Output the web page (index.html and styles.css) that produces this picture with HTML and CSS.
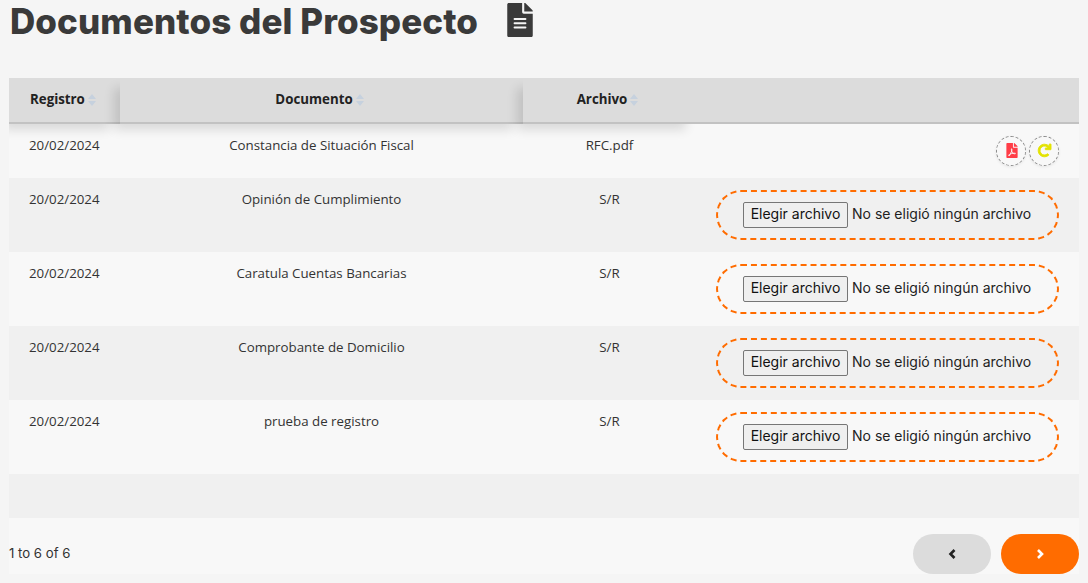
FILE: index.html
```html
<!DOCTYPE html>
<html lang="es">
<head>
<meta charset="utf-8">
<title>Documentos del Prospecto</title>
<link rel="stylesheet" href="styles.css">
</head>
<body>
<main class="page">
  <header class="title-row">
    <h1 class="title">Documentos del Prospecto</h1>
    <svg class="title-icon" viewBox="0 0 384 512"><path d="M224 136V0H24C10.7 0 0 10.7 0 24v464c0 13.3 10.7 24 24 24h336c13.3 0 24-10.7 24-24V160H248c-13.2 0-24-10.8-24-24zm64 236c0 6.6-5.4 12-12 12H108c-6.6 0-12-5.4-12-12v-8c0-6.6 5.4-12 12-12h168c6.6 0 12 5.4 12 12v8zm0-64c0 6.6-5.4 12-12 12H108c-6.6 0-12-5.4-12-12v-8c0-6.6 5.4-12 12-12h168c6.6 0 12 5.4 12 12v8zm0-72v8c0 6.6-5.4 12-12 12H108c-6.6 0-12-5.4-12-12v-8c0-6.6 5.4-12 12-12h168c6.6 0 12 5.4 12 12zm96-114.1v6.1H256V0h6.1c6.4 0 12.5 2.5 17 7l97.9 98c4.5 4.5 7 10.6 7 16.9z"/></svg>
  </header>
  <table class="docs">
    <colgroup><col class="c1"><col class="c2"><col class="c3"><col class="c4"></colgroup>
    <thead>
      <tr>
        <th class="left">Registro<svg class="sort" viewBox="0 0 8 12"><path d="M4 0l4 5H0zM4 12L0 7h8z"/></svg></th>
        <th class="doc">Documento<svg class="sort" viewBox="0 0 8 12"><path d="M4 0l4 5H0zM4 12L0 7h8z"/></svg></th>
        <th class="file">Archivo<svg class="sort" viewBox="0 0 8 12"><path d="M4 0l4 5H0zM4 12L0 7h8z"/></svg></th>
        <th></th>
      </tr>
    </thead>
    <tbody>
      <tr class="odd">
        <td class="left">20/02/2024</td><td>Constancia de Situación Fiscal</td><td>RFC.pdf</td>
        <td class="actions">
          <span class="round"><svg class="pdf" viewBox="0 0 384 512"><path d="M181.9 256.1c-5-16-4.9-46.9-2-46.9 8.4 0 7.6 36.9 2 46.9zm-1.7 47.2c-7.7 20.2-17.3 43.3-28.4 62.7 18.3-7 39-17.2 62.9-21.9-12.7-9.6-24.9-23.4-34.5-40.8zM86.1 428.1c0 .8 13.2-5.4 34.9-40.2-6.7 6.3-29.1 24.5-34.9 40.2zM248 160h136v328c0 13.3-10.7 24-24 24H24c-13.3 0-24-10.7-24-24V24C0 10.7 10.7 0 24 0h200v136c0 13.2 10.8 24 24 24zm-8 171.8c-20-12.2-33.3-29-42.7-53.8 4.5-18.5 11.6-46.6 6.2-64.2-4.7-29.4-42.4-26.5-47.8-6.8-5 18.3-.4 44.1 8.1 77-11.6 27.6-28.7 64.6-40.8 85.8-.1 0-.1.1-.2.1-27.1 13.9-73.6 44.5-54.5 68 5.6 6.9 16 10 21.5 10 17.9 0 35.7-18 61.1-61.8 25.8-8.5 54.1-19.1 79-23.2 21.7 11.8 47.1 19.5 64 19.5 29.2 0 31.2-32 19.7-43.4-13.9-13.6-54.3-9.7-73.6-7.2zM377 105L279 7c-4.5-4.5-10.6-7-17-7h-6v128h128v-6.1c0-6.3-2.5-12.4-7-16.9zm-74.1 255.3c4.1-2.7-2.5-11.9-42.8-9 37.1 15.8 42.8 9 42.8 9z"/></svg></span>
          <span class="round"><svg class="redo" viewBox="0 0 512 512"><path d="M500.33 0h-47.41a12 12 0 0 0-12 12.57l4 82.76A247.42 247.42 0 0 0 256 8C119.34 8 7.9 119.53 8 256.19 8.1 393.07 119.1 504 256 504a247.1 247.1 0 0 0 166.18-63.91 12 12 0 0 0 .48-17.43l-34-34a12 12 0 0 0-16.38-.55A176 176 0 1 1 402.1 157.8l-101.53-4.87a12 12 0 0 0-12.57 12v47.41a12 12 0 0 0 12 12h200.33a12 12 0 0 0 12-12V12a12 12 0 0 0-12-12z"/></svg></span>
        </td>
      </tr>
      <tr class="even">
        <td class="left">20/02/2024</td><td>Opinión de Cumplimiento</td><td>S/R</td>
        <td class="actions"><span class="upload"><button class="pick" type="button">Elegir archivo</button><span class="none">No se eligió ningún archivo</span></span></td>
      </tr>
      <tr class="odd">
        <td class="left">20/02/2024</td><td>Caratula Cuentas Bancarias</td><td>S/R</td>
        <td class="actions"><span class="upload"><button class="pick" type="button">Elegir archivo</button><span class="none">No se eligió ningún archivo</span></span></td>
      </tr>
      <tr class="even">
        <td class="left">20/02/2024</td><td>Comprobante de Domicilio</td><td>S/R</td>
        <td class="actions"><span class="upload"><button class="pick" type="button">Elegir archivo</button><span class="none">No se eligió ningún archivo</span></span></td>
      </tr>
      <tr class="odd">
        <td class="left">20/02/2024</td><td>prueba de registro</td><td>S/R</td>
        <td class="actions"><span class="upload"><button class="pick" type="button">Elegir archivo</button><span class="none">No se eligió ningún archivo</span></span></td>
      </tr>
      <tr class="even filler"><td colspan="4"></td></tr>
    </tbody>
  </table>
  <footer class="pager">
    <span class="count">1 to 6 of 6</span>
    <div class="pager-buttons">
      <button class="nav prev" type="button"><svg viewBox="0 0 10 14"><path d="M7.5 3L3.5 7l4 4"/></svg></button>
      <button class="nav next" type="button"><svg viewBox="0 0 10 14"><path d="M3 3l4 4-4 4"/></svg></button>
    </div>
  </footer>
</main>
</body>
</html>
```
FILE: styles.css
```css
* { box-sizing: border-box; }
html, body { margin: 0; height: 100%; }
body { background: #f5f5f5; color: #333; font-family: "Open Sans", sans-serif; font-size: 13.3px; overflow: hidden; }
.page { padding: 0 9px; }
.title-row { display: flex; align-items: flex-start; height: 78px; padding-left: 1px; }
.title { margin: 0; font-family: "Inter", sans-serif; font-weight: 800; font-size: 35px; line-height: 42px; letter-spacing: .08px; color: #3a3a3a; white-space: nowrap; }
.title-icon { width: 26px; height: 34px; margin: 3px 0 0 29px; fill: #3a3a3a; flex: none; }
.docs { width: 1070px; border-collapse: separate; border-spacing: 0; table-layout: fixed; overflow: hidden; }
.c1 { width: 111px; } .c2 { width: 403px; } .c3 { width: 173px; }
th { position: relative; height: 46px; padding: 0 0 2px; background: #dcdcdc; border-bottom: 2px solid #c2c2c2; font-weight: 700; color: #222; text-align: center; box-shadow: -8px 8px 10px -2px rgba(0,0,0,.12); }
th:last-child { box-shadow: none; }
th.left { text-align: left; padding-left: 21px; }
th.doc { padding-right: 4px; }
th.file { padding-right: 4px; }
.sort { width: 8px; height: 12px; margin-left: 3px; vertical-align: -2px; fill: #c6d1de; }
td { padding: 12px 0; text-align: center; vertical-align: top; line-height: 18px; color: #333; height: 74px; }
td.left { text-align: left; padding-left: 20px; }
.odd td { background: #f8f8f8; }
.even td { background: #f0f0f0; }
tbody tr:first-child td { height: 54px; }
.filler td { height: 44px; padding: 0; }
td.actions { display: flex; justify-content: flex-end; gap: 3px; padding-right: 20px; }
.round { display: flex; align-items: center; justify-content: center; width: 30px; height: 30px; border: 1px dashed #8a8a8a; border-radius: 50%; box-shadow: 0 1px 3px rgba(0,0,0,.08); }
.pdf { width: 12px; height: 15px; margin: 0 0 1px 1px; fill: #ff3d47; }
.redo { width: 13px; height: 13px; margin-bottom: 1px; fill: #e3e300; stroke: #e3e300; stroke-width: 36; overflow: visible; }
.upload { display: flex; align-items: center; width: 343px; height: 50px; padding: 0 0 1px 25px; border: 2px dashed #ff6c00; border-radius: 25px; font-family: "Inter", sans-serif; font-size: 14px; color: #222; }
.pick { width: 105px; height: 26px; padding: 0 0 1px; background: #efefef; border: 1px solid #767676; border-radius: 2px; font: inherit; color: #111; flex: none; }
.none { margin-left: 4px; padding-bottom: 1px; white-space: nowrap; }
.pager { display: flex; justify-content: space-between; align-items: center; height: 56px; padding-top: 16px; background: #f8f8f8; }
.count { padding-bottom: 2px; font-family: "Inter", sans-serif; font-size: 13.2px; color: #333; }
.pager-buttons { display: flex; gap: 10px; }
.nav { display: flex; align-items: center; justify-content: center; width: 78px; height: 40px; padding: 0; border: 0; border-radius: 20px; }
.nav svg { width: 10px; height: 14px; fill: none; stroke-width: 2.6; }
.prev { background: #dcdcdc; } .prev svg { stroke: #222; }
.next { background: #ff6c00; } .next svg { stroke: #fff; }
```
